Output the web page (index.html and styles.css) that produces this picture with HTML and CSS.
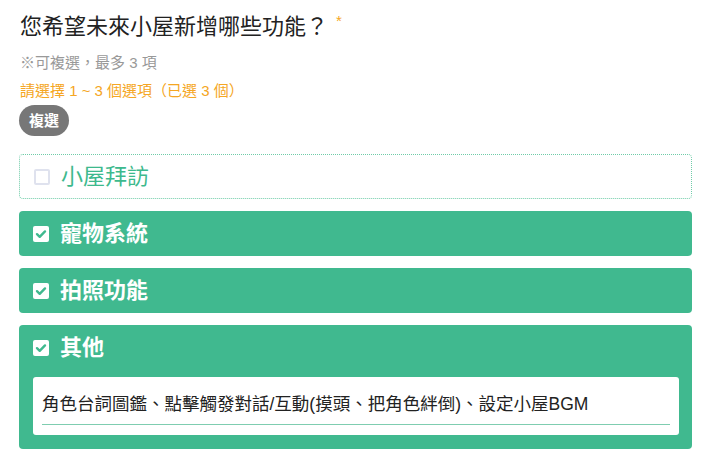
FILE: index.html
```html
<!DOCTYPE html>
<html lang="zh-Hant">
<head>
  <meta charset="UTF-8">
  <meta name="viewport" content="width=device-width, initial-scale=1.0">
  <title>小屋新功能調查</title>
  <link rel="stylesheet" href="styles.css">
</head>
<body>
  <div class="question">
    <h2 class="question-title">您希望未來小屋新增哪些功能？<span class="required">*</span></h2>
    <p class="hint">※可複選，最多 3 項</p>
    <p class="status">請選擇 1 ~ 3 個選項（已選 3 個）</p>
    <span class="badge">複選</span>

    <div class="options">
      <label class="option">
        <span class="box"></span>
        <span class="option-text">小屋拜訪</span>
      </label>
      <label class="option checked">
        <span class="box"><svg viewBox="0 0 16 16"><path d="M4 8.2l2.7 2.6L12 5.4"/></svg></span>
        <span class="option-text">寵物系統</span>
      </label>
      <label class="option checked">
        <span class="box"><svg viewBox="0 0 16 16"><path d="M4 8.2l2.7 2.6L12 5.4"/></svg></span>
        <span class="option-text">拍照功能</span>
      </label>
      <div class="option checked other">
        <div class="other-head">
          <span class="box"><svg viewBox="0 0 16 16"><path d="M4 8.2l2.7 2.6L12 5.4"/></svg></span>
          <span class="option-text">其他</span>
        </div>
        <div class="other-field">
          <div class="other-input">角色台詞圖鑑、點擊觸發對話/互動(摸頭、把角色絆倒)、設定小屋BGM</div>
        </div>
      </div>
    </div>
  </div>
</body>
</html>
```

FILE: styles.css
```css
body {
  margin: 0;
  background-color: #FFFFFF;
  font-family: "Liberation Sans", "Noto Sans CJK TC", sans-serif;
}
.question {
  width: 673px;
  margin-left: 19px;
  padding-top: 12px;
}
.question-title {
  margin: 0 0 0 1px;
  font-size: 22px;
  font-weight: normal;
  line-height: 30px;
  color: #222;
}
.required {
  display: inline-block;
  vertical-align: top;
  margin-left: 8px;
  font-size: 15px;
  line-height: 18px;
  color: #f5a623;
}
.hint {
  margin: 11px 0 0 1px;
  font-size: 15px;
  line-height: 20px;
  color: #999;
}
.status {
  margin: 8px 0 0 1px;
  font-size: 15px;
  line-height: 20px;
  color: #f5a623;
}
.badge {
  display: inline-block;
  margin-top: 4px;
  padding: 0 10px;
  height: 31px;
  line-height: 31px;
  border-radius: 16px;
  background-color: #777;
  color: white;
  font-size: 15px;
  font-weight: bold;
}
.options {
  display: flex;
  flex-direction: column;
  gap: 12px;
  margin-top: 18px;
}
.option {
  display: flex;
  align-items: center;
  gap: 11px;
  height: 45px;
  padding: 0 14px;
  border-radius: 4px;
  box-sizing: border-box;
  border: 1px dotted #6fcca8;
  color: #3db98d;
  font-size: 22px;
}
.option.checked {
  border: none;
  background-color: #40b98f;
  color: white;
  font-weight: bold;
}
.box {
  display: flex;
  width: 16px;
  height: 16px;
  border: 2px solid #dfe2ee;
  border-radius: 2px;
  box-sizing: border-box;
  flex-shrink: 0;
  background-color: white;
}
.checked .box {
  border: none;
}
.box svg {
  width: 16px;
  height: 16px;
  fill: none;
  stroke: #40b98f;
  stroke-width: 2.4;
  stroke-linecap: round;
  stroke-linejoin: round;
}
.option-text {
  line-height: 30px;
}
.option.other {
  display: block;
  height: auto;
  padding: 0 13px 14px 14px;
}
.other-head {
  display: flex;
  align-items: center;
  gap: 11px;
  height: 46px;
}
.other-field {
  margin-top: 6px;
  background-color: white;
  border-radius: 3px;
  padding: 14px 9px 10px 9px;
  font-weight: normal;
}
.other-input {
  border-bottom: 1px solid #7fcdb0;
  color: #222;
  font-size: 17.5px;
  line-height: 26px;
  padding-bottom: 7px;
}
```
